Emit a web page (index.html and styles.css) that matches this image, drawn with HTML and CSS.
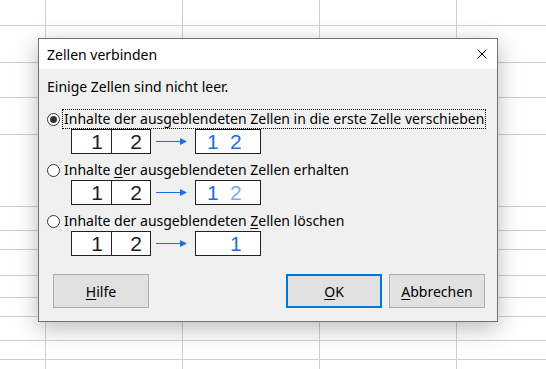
FILE: index.html
```html
<!DOCTYPE html>
<html lang="de">
<head>
  <meta charset="UTF-8">
  <title>Zellen verbinden</title>
  <link rel="stylesheet" href="styles.css">
</head>
<body>
  <!-- Tabelle im Hintergrund -->
  <div class="sheet">
    <div class="row h26"></div>
    <div class="row h37"></div>
    <div class="row h35"></div>
    <div class="row h37"></div>
    <div class="row h72"></div>
    <div class="row h24"></div>
    <div class="row h19"></div>
    <div class="row h26"></div>
    <div class="row h22"></div>
    <div class="row h19"></div>
    <div class="row h24"></div>
    <div class="row h19"></div>
    <div class="row h19"></div>
  </div>

  <!-- Dialog -->
  <div class="dialog">
    <div class="titlebar">
      <span class="title">Zellen verbinden</span>
      <svg class="close" width="10" height="10" viewBox="0 0 10 10">
        <path d="M0.5 0.5 L9.5 9.5 M9.5 0.5 L0.5 9.5" stroke="#000" stroke-width="1" fill="none"/>
      </svg>
    </div>
    <div class="content">
      <p class="message">Einige Zellen sind nicht leer.</p>

      <div class="option">
        <label class="choice focused">
          <span class="radio checked"></span>
          <span class="choice-text">Inhalte der ausgeblendeten Zellen in die erste Zelle verschieben</span>
        </label>
        <div class="preview">
          <div class="pair"><span class="cell">1</span><span class="cell">2</span></div>
          <svg class="arrow" width="31" height="9" viewBox="0 0 31 9">
            <path d="M0 4.5 H25" stroke="#1a6fe0" stroke-width="1"/>
            <path d="M24 1 L31 4.5 L24 8 Z" fill="#1a6fe0"/>
          </svg>
          <div class="result"><span class="digit">1</span><span class="digit">2</span></div>
        </div>
      </div>

      <div class="option">
        <label class="choice">
          <span class="radio"></span>
          <span class="choice-text">Inhalte <u>d</u>er ausgeblendeten Zellen erhalten</span>
        </label>
        <div class="preview">
          <div class="pair"><span class="cell">1</span><span class="cell">2</span></div>
          <svg class="arrow" width="31" height="9" viewBox="0 0 31 9">
            <path d="M0 4.5 H25" stroke="#1a6fe0" stroke-width="1"/>
            <path d="M24 1 L31 4.5 L24 8 Z" fill="#1a6fe0"/>
          </svg>
          <div class="result"><span class="digit">1</span><span class="digit light">2</span></div>
        </div>
      </div>

      <div class="option">
        <label class="choice">
          <span class="radio"></span>
          <span class="choice-text">Inhalte der ausgeblendeten <u>Z</u>ellen löschen</span>
        </label>
        <div class="preview">
          <div class="pair"><span class="cell">1</span><span class="cell">2</span></div>
          <svg class="arrow" width="31" height="9" viewBox="0 0 31 9">
            <path d="M0 4.5 H25" stroke="#1a6fe0" stroke-width="1"/>
            <path d="M24 1 L31 4.5 L24 8 Z" fill="#1a6fe0"/>
          </svg>
          <div class="result"><span class="digit"></span><span class="digit">1</span></div>
        </div>
      </div>
    </div>

    <div class="buttons">
      <button class="btn" type="button"><u>H</u>ilfe</button>
      <span class="spacer"></span>
      <button class="btn btn-default" type="button"><u>O</u>K</button>
      <button class="btn" type="button"><u>A</u>bbrechen</button>
    </div>
  </div>
</body>
</html>
```

FILE: styles.css
```css
/* Allgemein */
* {
  margin: 0;
  padding: 0;
  box-sizing: border-box;
}
body {
  width: 546px;
  height: 369px;
  overflow: hidden;
  position: relative;
  background: #fff;
  font-family: 'Noto Sans', 'Open Sans', sans-serif;
  font-size: 14px;
  color: #000;
}

/* Tabelle */
.sheet {
  width: 100%;
  height: 100%;
  background-image: repeating-linear-gradient(90deg, #d0d0d0 0 1px, transparent 1px 137px);
  background-position: 45px 0;
}
.row {
  border-bottom: 1px solid #d0d0d0;
}
.h19 { height: 19px; }
.h22 { height: 22px; }
.h24 { height: 24px; }
.h26 { height: 26px; }
.h35 { height: 35px; }
.h37 { height: 37px; }
.h72 { height: 72px; }

/* Dialog */
.dialog {
  position: absolute;
  left: 38px;
  top: 38px;
  width: 460px;
  height: 284px;
  border: 1px solid #737373;
  background: #f0f0f0;
  box-shadow: 0 6px 22px rgba(0, 0, 0, 0.28);
  display: flex;
  flex-direction: column;
}
.titlebar {
  height: 30px;
  background: #fff;
  display: flex;
  align-items: center;
  justify-content: space-between;
  padding: 0 10px 0 8px;
}
.title {
  font-size: 14px;
  color: #000;
}
.close {
  display: block;
}
.content {
  padding: 10px 8px 0 8px;
}
.message {
  line-height: 16px;
  margin-bottom: 14px;
}
.option {
  margin-bottom: 6px;
}
.choice {
  display: flex;
  align-items: center;
  height: 20px;
}
.radio {
  width: 13px;
  height: 13px;
  border: 1px solid #333;
  border-radius: 50%;
  background: #fff;
  margin-right: 2px;
  display: flex;
  align-items: center;
  justify-content: center;
}
.radio.checked::after {
  content: '';
  width: 7px;
  height: 7px;
  border-radius: 50%;
  background: #333;
}
.choice-text {
  border: 1px dotted transparent;
  padding: 1px 1px;
  line-height: 16px;
  white-space: nowrap;
}
.choice.focused .choice-text {
  border-color: #000;
}
u {
  text-decoration: underline;
  text-underline-offset: 2px;
}

/* Vorschau */
.preview {
  display: flex;
  align-items: center;
  margin-left: 24px;
  height: 25px;
  font-family: 'Liberation Sans', Arial, sans-serif;
  font-size: 21px;
  line-height: 23px;
}
.pair {
  display: flex;
  border: 1px solid #222;
  background: #fff;
  height: 25px;
}
.cell {
  width: 39px;
  text-align: right;
  padding-right: 8px;
  color: #1e1e1e;
}
.cell + .cell {
  width: 39px;
  border-left: 1px solid #222;
}
.arrow {
  display: block;
  margin: 0 8px 0 5px;
}
.result {
  display: flex;
  gap: 11px;
  width: 66px;
  height: 25px;
  border: 1px solid #222;
  background: #fff;
  padding-left: 11px;
}
.digit {
  width: 12px;
  color: #1a6fe0;
}
.digit.light {
  color: #78abef;
}

/* Schaltflächen */
.buttons {
  margin-top: auto;
  display: flex;
  gap: 7px;
  padding: 0 12px 13px 14px;
}
.spacer {
  flex: 1;
}
.btn {
  width: 96px;
  height: 34px;
  background: #e1e1e1;
  border: 1px solid #adadad;
  font-family: inherit;
  font-size: 14px;
  color: #000;
}
.btn-default {
  border: 2px solid #0078d7;
}
```
